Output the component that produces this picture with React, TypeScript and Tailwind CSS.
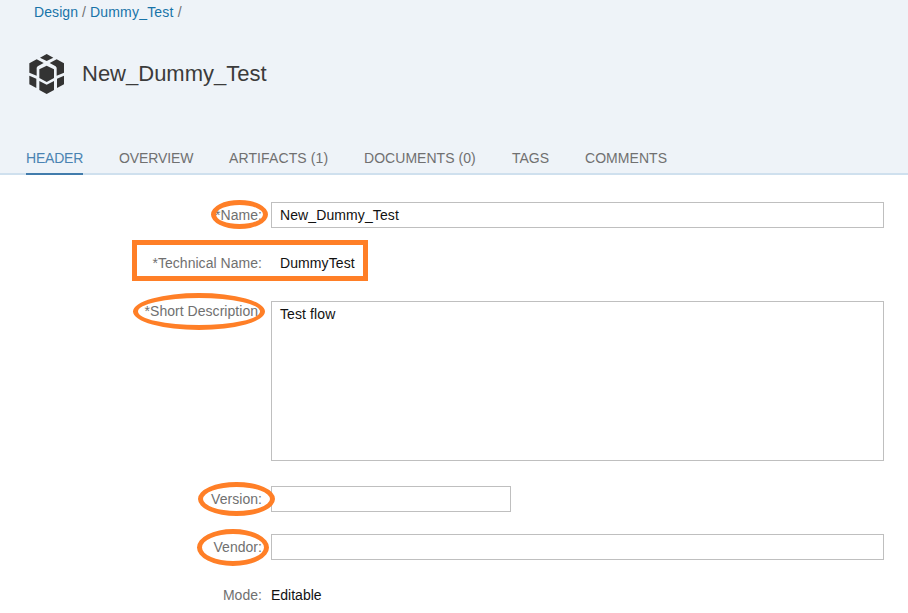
import React from "react";

const tabs = [
  { label: "HEADER", size: "w-[57px] tracking-[-0.2px]" },
  { label: "OVERVIEW", size: "w-[74px] tracking-[-0.12px]" },
  { label: "ARTIFACTS (1)", size: "w-[99px] tracking-[0.11px]" },
  { label: "DOCUMENTS (0)", size: "w-[112px] tracking-[0.04px]" },
  { label: "TAGS", size: "w-[37px]" },
  { label: "COMMENTS", size: "w-[82px] tracking-[0.05px]" },
];

function PackageIcon() {
  return (
    <svg className="h-10 w-9 shrink-0" viewBox="0 0 108 120" fill="#333333">
      <path d="M53 0 73 11 53 21 33 11Z" />
      <path d="M23 16 44 27 26 37 23 41V65L1 56V28Z" />
      <path d="M83 16 62 27 80 37 83 41V65L105 56V28Z" />
      <path d="M53 35 75 46V72L53 84 31 72V46Z" />
      <path d="M1 65 22 74V102L1 91Z" />
      <path d="M105 65 84 74V102L105 91Z" />
      <path d="M31 81 53 92 75 81V108L53 120 31 108Z" />
    </svg>
  );
}

function Ring({ className }: { className: string }) {
  return <span className={`pointer-events-none absolute rounded-[50%] border-[5px] border-[#ff7f27] ${className}`} />;
}

type RowProps = { label: string; className: string; labelClass?: string; ring?: React.ReactNode; children?: React.ReactNode };

function Row({ label, className, labelClass = "", ring, children }: RowProps) {
  return (
    <div className={`relative flex gap-[9px] ${className}`}>
      <label className={`w-[262px] shrink-0 text-right leading-[26px] tracking-[0.04px] text-[#707070] ${labelClass}`}>{label}</label>
      {children}
      {ring}
    </div>
  );
}

const box = "border border-[#bfbfbf] bg-white px-2 text-[#111111] outline-none";

export default function App() {
  return (
    <div className="h-[613px] w-[908px] overflow-hidden bg-white font-['Liberation_Sans',Arial,sans-serif] text-[14px]">
      <header className="flex h-[175px] flex-col border-b-2 border-[#cfe0ee] bg-[#eef3f8]">
        <nav className="flex h-6 gap-1 pl-[34px] leading-6 text-[#1873a8]">
          <a className="tracking-[0.08px]">Design</a>
          <span className="text-[#707070]">/</span>
          <a className="tracking-[0.2px]">Dummy_Test</a>
          <span className="text-[#707070]">/</span>
        </nav>
        <div className="flex h-[100px] items-center gap-[17px] pl-[29px]">
          <PackageIcon />
          <h1 className="-mt-0.5 text-[22px] text-[#3b3b3b]">New_Dummy_Test</h1>
        </div>
        <div className="-mb-0.5 flex flex-1 gap-9 pl-[26px]">
          {tabs.map((tab, i) => (
            <button
              key={tab.label}
              className={`flex h-[51px] shrink-0 items-end border-b-2 pb-[5px] leading-[20px] whitespace-nowrap ${tab.size} ${i === 0 ? "border-[#427cac] text-[#4a83b2]" : "border-transparent text-[#707070]"}`}
            >
              {tab.label}
            </button>
          ))}
        </div>
      </header>
      <main className="flex flex-col pt-[27px]">
        <Row label="*Name:" className="h-[26px]" ring={<Ring className="-top-0.5 left-[211px] h-[29px] w-[57px]" />}>
          <input className={`h-[26px] w-[613px] tracking-[0.1px] ${box}`} defaultValue="New_Dummy_Test" />
        </Row>
        <Row
          label="*Technical Name:"
          className="mt-[22px] h-[26px]"
          ring={<span className="absolute -top-[10px] left-[132px] h-[41px] w-[236px] border-[5px] border-[#ff7f27]" />}
        >
          <span className="pl-[9px] leading-[26px] tracking-[0.1px] text-[#111111]">DummyTest</span>
        </Row>
        <Row
          label="*Short Description:"
          className="mt-[25px] h-[160px]"
          labelClass="-mt-[3px]"
          ring={<Ring className="-top-2 left-[133px] h-[37px] w-[132px]" />}
        >
          <textarea className={`h-[160px] w-[613px] resize-none pt-1 leading-4 tracking-[0.1px] ${box}`} defaultValue="Test flow" />
        </Row>
        <Row label="Version:" className="mt-[25px] h-[26px]" ring={<Ring className="-top-1 left-[198px] h-[34px] w-[77px]" />}>
          <input className={`h-[26px] w-60 ${box}`} />
        </Row>
        <Row label="Vendor:" className="mt-[22px] h-[26px]" ring={<Ring className="-top-[5px] left-[197px] h-[37px] w-[72px]" />}>
          <input className={`h-[26px] w-[613px] ${box}`} />
        </Row>
        <Row label="Mode:" className="mt-[22px] h-[26px]">
          <span className="leading-[26px] text-[#111111]">Editable</span>
        </Row>
      </main>
    </div>
  );
}
